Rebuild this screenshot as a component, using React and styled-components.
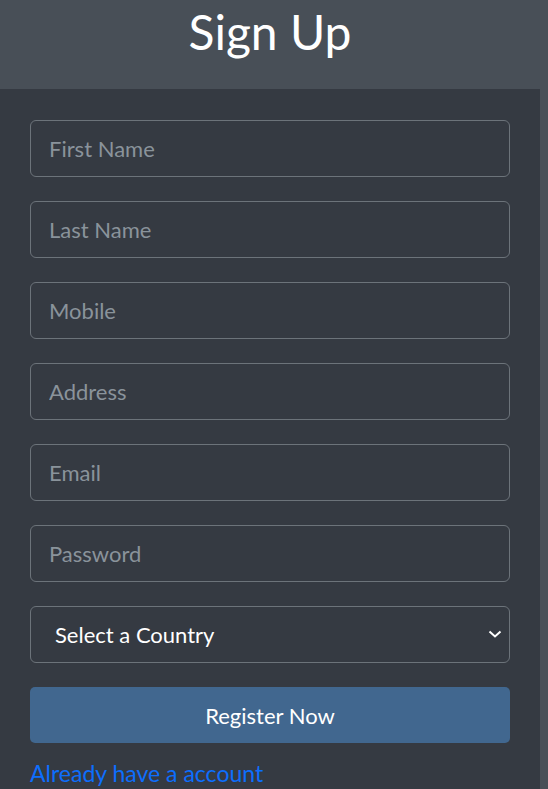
import React from 'react';
import styled, { createGlobalStyle } from 'styled-components';

const GlobalStyle = createGlobalStyle`
  html, body {
    margin: 0;
    padding: 0;
    background: #484f57;
    font-family: Lato, "Noto Sans", sans-serif;
  }
  * { box-sizing: border-box; }
`;

const Page = styled.div`
  width: 548px;
  min-height: 789px;
  background: #484f57;
`;

const Header = styled.header`
  width: 540px;
  height: 89px;
  display: flex;
  justify-content: center;
  align-items: flex-start;
`;

const Title = styled.h1`
  margin: 0;
  padding-top: 2px;
  color: #fff;
  font-size: 48px;
  font-weight: 400;
  line-height: 60px;
`;

const Panel = styled.form`
  width: 540px;
  min-height: 700px;
  background: #353a42;
  padding: 31px 30px 0;
  display: flex;
  flex-direction: column;
  gap: 24px;
`;

const Field = styled.input`
  width: 480px;
  height: 57px;
  padding: 0 18px;
  border: 1px solid #6c737a;
  border-radius: 6px;
  background: transparent;
  color: #fff;
  font-family: inherit;
  font-size: 22px;
  outline: none;

  &::placeholder {
    color: #8a939b;
  }
`;

const SelectWrap = styled.div`
  position: relative;
  width: 480px;
  height: 57px;
`;

const Select = styled.select`
  appearance: none;
  -webkit-appearance: none;
  width: 100%;
  height: 100%;
  padding: 0 24px;
  border: 1px solid #6c737a;
  border-radius: 6px;
  background: transparent;
  color: #fff;
  font-family: inherit;
  font-size: 22px;
  outline: none;
`;

const Chevron = styled.svg`
  position: absolute;
  right: 8px;
  top: 23px;
  pointer-events: none;
`;

const Button = styled.button`
  width: 480px;
  height: 56px;
  border: none;
  border-radius: 5px;
  background: #41678f;
  color: #fff;
  font-family: inherit;
  font-size: 22px;
`;

const Link = styled.a`
  margin-top: -7px;
  color: #0d6efd;
  font-size: 23px;
  text-decoration: none;
  line-height: 26px;
`;

const fields = ['First Name', 'Last Name', 'Mobile', 'Address', 'Email', 'Password'];

const App = () => (
  <Page>
    <GlobalStyle />
    <Header>
      <Title>Sign Up</Title>
    </Header>
    <Panel onSubmit={e => e.preventDefault()}>
      {fields.map(f => (
        <Field key={f} placeholder={f} type={f === 'Password' ? 'password' : 'text'} />
      ))}
      <SelectWrap>
        <Select defaultValue="">
          <option value="">Select a Country</option>
        </Select>
        <Chevron width="14" height="10" viewBox="0 0 14 10">
          <path d="M1.5 2.5 L7 7.5 L12.5 2.5" fill="none" stroke="#fff" strokeWidth="2" />
        </Chevron>
      </SelectWrap>
      <Button type="submit">Register Now</Button>
      <Link href="#">Already have a account</Link>
    </Panel>
  </Page>
);

export default App;
